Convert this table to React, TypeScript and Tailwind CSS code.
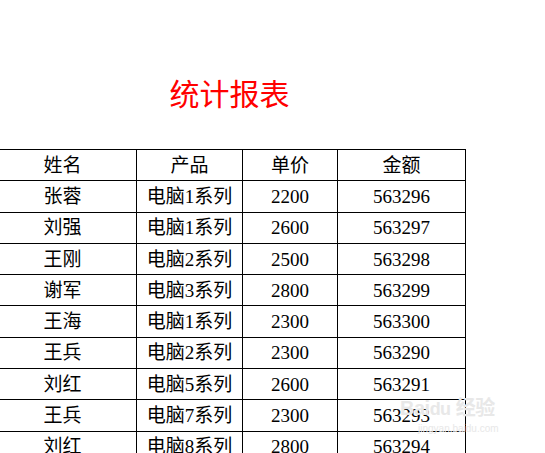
const rows = [
  ['张蓉', '电脑1系列', '2200', '563296'],
  ['刘强', '电脑1系列', '2600', '563297'],
  ['王刚', '电脑2系列', '2500', '563298'],
  ['谢军', '电脑3系列', '2800', '563299'],
  ['王海', '电脑1系列', '2300', '563300'],
  ['王兵', '电脑2系列', '2300', '563290'],
  ['刘红', '电脑5系列', '2600', '563291'],
  ['王兵', '电脑7系列', '2300', '563293'],
  ['刘红', '电脑8系列', '2800', '563294'],
];

const font = { fontFamily: '"Liberation Serif", "Noto Sans CJK SC", serif' };

export default function App() {
  return (
    <div className="relative w-[545px] h-[453px] overflow-hidden bg-white text-black" style={font}>
      {/* Title */}
      <div className="ml-[-9px] w-[477px] pt-[77px] text-center text-[30px] leading-[36px] text-[#ff0000]">
        统计报表
      </div>

      {/* Table */}
      <table className="ml-[-12px] mt-[36px] border-collapse text-[19px] leading-none">
        <colgroup>
          <col className="w-[148px]" />
          <col className="w-[106px]" />
          <col className="w-[95px]" />
          <col className="w-[128px]" />
        </colgroup>
        <thead>
          <tr>
            {['姓名', '产品', '单价', '金额'].map(h => (
              <th key={h} className="h-[31.3px] border border-black p-0 text-center font-normal">
                {h}
              </th>
            ))}
          </tr>
        </thead>
        <tbody>
          {rows.map((r, i) => (
            <tr key={i}>
              {r.map((c, j) => (
                <td key={j} className="h-[31.3px] border border-black p-0 text-center">
                  {c}
                </td>
              ))}
            </tr>
          ))}
        </tbody>
      </table>

      {/* watermark */}
      <div className="absolute left-[400px] top-[398px] text-[#e8e8e8] select-none">
        <div className="text-[20px] font-bold leading-none tracking-tight" style={{ fontFamily: '"Liberation Sans", "Noto Sans CJK SC", sans-serif' }}>
          Bai<span className="text-[18px]">du</span> 经验
        </div>
        <div className="mt-[6px] ml-[18px] text-[10px] leading-none" style={{ fontFamily: '"Liberation Sans", sans-serif' }}>
          jingyan.baidu.com
        </div>
      </div>
    </div>
  );
}
